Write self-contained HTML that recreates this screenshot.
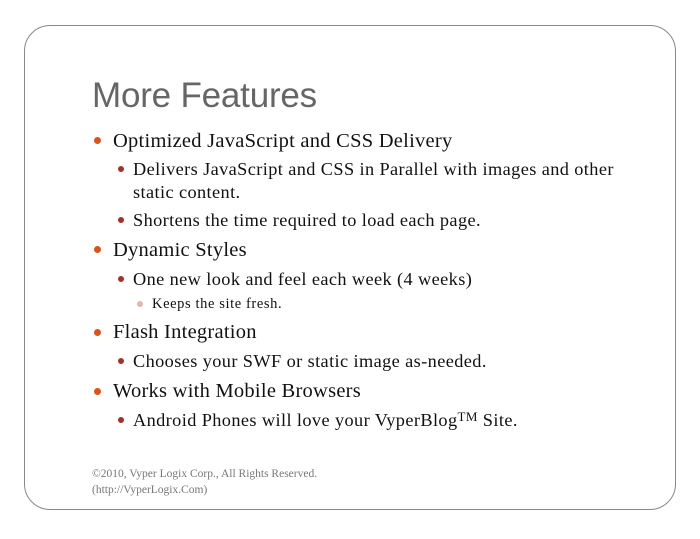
<!DOCTYPE html>
<html><head><style>
body{margin:0;width:700px;height:539px;background:#fff;position:relative;overflow:hidden;font-family:"Liberation Serif",serif;color:#111}
.frame{position:absolute;left:24px;top:25px;width:652px;height:485px;border:1px solid #888;border-radius:26px;box-sizing:border-box}
.t{position:absolute;white-space:nowrap;line-height:1}
h1{position:absolute;left:92px;top:78px;margin:0;font:35px "Liberation Sans",sans-serif;color:#666;line-height:1;letter-spacing:-0.2px}
.l1{font-size:20.5px;left:113px;letter-spacing:0.25px}
.l2{font-size:18.3px;left:133px;letter-spacing:0.4px}
.l3{font-size:14.5px;left:152px;letter-spacing:0.6px}
.b{position:absolute;border-radius:50%}
.b1{width:7px;height:7px;background:#d9531e}
.b2{width:6px;height:6px;background:#a3302a}
.b3{width:6px;height:6px;background:#e6b3b0}
.f{font-size:11.5px;color:#777;left:92px}
</style></head><body>
<div class="frame"></div>
<h1>More Features</h1>
<div class="b b1" style="left:94px;top:137px"></div><div class="t l1" style="top:131px">Optimized JavaScript and CSS Delivery</div>
<div class="b b2" style="left:118px;top:166px"></div><div class="t l2" style="top:160px">Delivers JavaScript and CSS in Parallel with images and other</div>
<div class="t l2" style="top:183px">static content.</div>
<div class="b b2" style="left:118px;top:217px"></div><div class="t l2" style="top:211px">Shortens the time required to load each page.</div>
<div class="b b1" style="left:94px;top:246px"></div><div class="t l1" style="top:240px">Dynamic Styles</div>
<div class="b b2" style="left:118px;top:276px"></div><div class="t l2" style="top:270px">One new look and feel each week (4 weeks)</div>
<div class="b b3" style="left:137px;top:301px"></div><div class="t l3" style="top:297px">Keeps the site fresh.</div>
<div class="b b1" style="left:94px;top:329px"></div><div class="t l1" style="top:322px">Flash Integration</div>
<div class="b b2" style="left:118px;top:358px"></div><div class="t l2" style="top:352px">Chooses your SWF or static image as-needed.</div>
<div class="b b1" style="left:94px;top:388px"></div><div class="t l1" style="top:381px">Works with Mobile Browsers</div>
<div class="b b2" style="left:118px;top:417px"></div><div class="t l2" style="top:411px">Android Phones will love your VyperBlog<span style="font-size:13px;position:relative;top:-5px">TM</span> Site.</div>
<div class="t f" style="top:469px">©2010, Vyper Logix Corp., All Rights Reserved.</div>
<div class="t f" style="top:485px">(http://VyperLogix.Com)</div>
</body></html>
